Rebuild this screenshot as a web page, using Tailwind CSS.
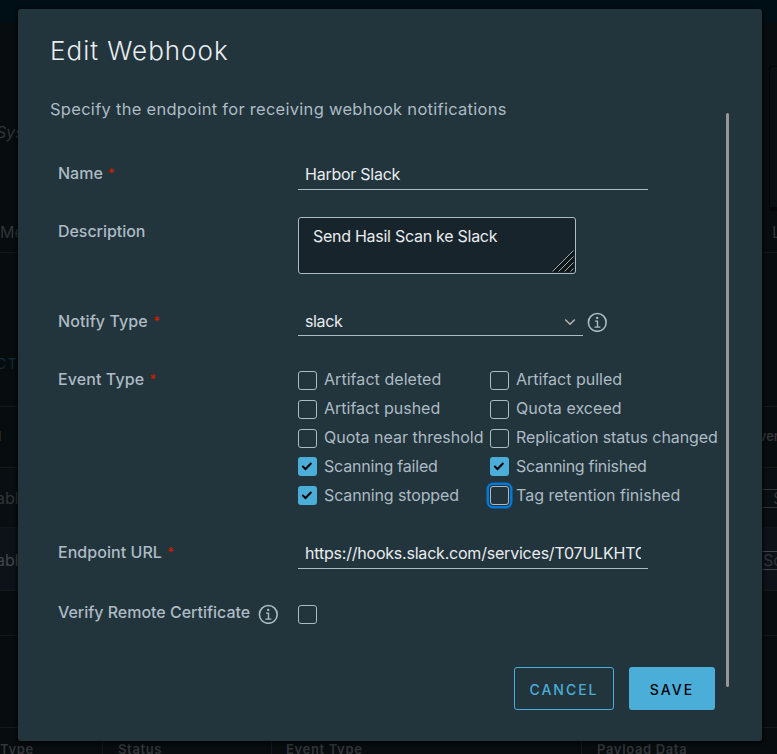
<!DOCTYPE html>
<html lang="en">
<head>
  <meta charset="UTF-8" />
  <meta name="viewport" content="width=device-width, initial-scale=1.0" />
  <title>Edit Webhook</title>
  <script src="https://cdn.jsdelivr.net/npm/@tailwindcss/browser@4"></script>
</head>
<body class="relative h-[754px] w-[777px] overflow-hidden bg-[#070c0f] font-['Inter',sans-serif] text-base text-[#adbbc4]">

  <!-- Page behind the dialog -->
  <div class="flex h-full flex-col overflow-hidden text-[#303538]">
    <div class="h-[23px] shrink-0 bg-[#000f16]"></div>
    <div class="flex h-[188px] shrink-0 justify-between">
      <span class="-ml-1 mt-[97px] italic">Sys</span>
      <div class="mt-[43px] w-2 rounded-l-sm border border-r-0 border-b-4 border-[#030506] bg-[#080e12]"></div>
    </div>
    <div class="flex h-[42px] shrink-0 items-center justify-between border-b border-[#14191c]"><span>Me</span><span class="-mr-1">L</span></div>
    <div class="flex h-[154px] shrink-0 items-end border-b border-[#14191c] pb-[34px] text-sm leading-4 tracking-[1.5px] text-[#102a36]"><span class="-ml-1">CT</span></div>
    <div class="flex h-[61px] shrink-0 items-center justify-between border-b border-[#14191c] text-[13px] font-semibold"><span class="-ml-0.5">l</span><span class="-mr-0.5">ver</span></div>
    <div class="flex h-[60px] shrink-0 items-center justify-between border-b border-[#101518] bg-[#080e11] pt-px">
      <span class="-ml-1">abl</span>
      <div class="h-[19px] w-4 overflow-hidden border-y border-[#303538] pl-3 leading-4">S</div>
    </div>
    <div class="flex h-[63px] shrink-0 items-center justify-between border-b border-[#14191c] bg-[#0c1218] pt-0.5">
      <span class="-ml-1 text-[#40464a]">abl</span>
      <div class="h-[19px] w-4 overflow-hidden border-y border-[#40464a] pl-0.5 leading-4">Sc</div>
    </div>
    <div class="h-[45px] shrink-0 border-b border-[#14191c]"></div>
    <div class="h-[92px] shrink-0 border-b border-[#14191c]"></div>
    <div class="flex h-11 shrink-0 text-[13px] leading-[43px] font-semibold tracking-[0.65px]">
      <div class="w-[103px] border-r border-[#14191c]">Type</div>
      <div class="w-[169px] border-r border-[#14191c] pl-[15px]">Status</div>
      <div class="w-[310px] border-r border-[#14191c] pl-3.5">Event Type</div>
      <div class="pl-[15px]">Payload Data</div>
    </div>
  </div>

  <!-- Dialog -->
  <div class="absolute top-[9px] left-[18px] flex h-[732px] w-[744px] flex-col rounded-[3px] bg-[#22343c] pt-6 pl-8 shadow-[0_1px_3px_2px_rgba(0,0,0,0.5)]">
    <h3 class="h-9 text-[26px] leading-9 font-light tracking-[1px] text-[#e9ecef]">Edit Webhook</h3>

    <div class="mt-7 flex">
      <div class="w-[676px]">
        <p class="h-6 text-[16.5px] leading-6 tracking-[0.28px] whitespace-nowrap">Specify the endpoint for receiving webhook notifications</p>

        <form class="mt-[38px] pl-[7px] leading-7">
          <div class="flex h-[58px]">
            <label class="w-[241px] pl-px font-[550]">Name <span class="ml-px align-[1px] text-[13px] text-[#c92100]">*</span></label>
            <div class="h-[31px] w-[350px] border-b border-[#adbbc4] px-[7px] leading-[30px] tracking-[-0.25px] text-[#e9ecef]">Harbor Slack</div>
          </div>

          <div class="flex h-[90px]">
            <label class="w-[241px] pl-px font-[550] tracking-[-0.05px]">Description</label>
            <div class="relative h-[57px] w-[278px] rounded-[3px] border border-[#adbbc4] bg-[#17242b] px-3.5 pt-1 tracking-[-0.27px] text-[#e9ecef]">Send Hasil Scan ke Slack
              <svg class="absolute right-px bottom-px h-[22px] w-[22px]" viewBox="0 0 22 22" fill="none">
                <path d="M0 22 22 0v22z" fill="#0e171b" />
                <path d="M.5 21.5l21-21M6.5 21.5l15-15M12.5 21.5l9-9M18.5 21.5l3-3" stroke="#aaa8a4" />
              </svg>
            </div>
          </div>

          <div class="flex h-[58px]">
            <label class="w-[241px] pl-px font-[550] tracking-[0.1px]">Notify Type <span class="ml-px align-[1px] text-[13px] text-[#c92100]">*</span></label>
            <div class="flex h-[29px] w-[285px] items-center justify-between border-b border-[#adbbc4] pr-[7px] pl-[7px] tracking-[-0.35px] text-[#e9ecef]">
              <span>slack</span>
              <svg class="mt-0.5 h-3 w-3" viewBox="0 0 12 12" fill="none" stroke="#b9b7b2" stroke-width="1.5"><path d="M1.2 3.5 6 8.3l4.8-4.8" /></svg>
            </div>
            <svg class="mt-[5px] ml-1 h-5 w-5" viewBox="0 0 20 20" fill="none" stroke="#adbbc4">
              <circle cx="10.3" cy="10.4" r="8.9" stroke-width="1.6" />
              <circle cx="10.2" cy="5.9" r="1.2" fill="#adbbc4" stroke="none" />
              <path d="M8 9.1h2.5v6M7.5 15.1h5.8" stroke-width="1.4" />
            </svg>
          </div>

          <div class="flex h-[173px]">
            <label class="w-[241px] shrink-0 pl-px font-[550] tracking-[0.1px]">Event Type <span class="ml-px align-[1px] text-[13px] text-[#c92100]">*</span></label>
            <div id="eventTypes" class="grid h-[145px] grid-cols-[192px_228px] grid-rows-5 whitespace-nowrap"></div>
          </div>

          <div class="flex h-[60px]">
            <label class="w-[241px] pl-px font-[550] tracking-[0.05px]">Endpoint URL <span class="ml-px align-[1px] text-[13px] text-[#c92100]">*</span></label>
            <div class="h-[31px] w-[350px] border-b border-[#adbbc4] px-[7px] leading-[30px] tracking-[-0.21px] text-[#e9ecef]">
              <div class="overflow-hidden whitespace-nowrap">https://hooks.slack.com/services/T07ULKHTC</div>
            </div>
          </div>

          <div class="flex h-[69px]">
            <div class="flex w-[241px] pl-px font-[550] tracking-[-0.02px]">
              <label class="w-[200px] whitespace-nowrap">Verify Remote Certificate</label>
              <svg class="mt-1.5 h-5 w-5" viewBox="0 0 20 20" fill="none" stroke="#adbbc4">
                <circle cx="10.3" cy="10.4" r="8.9" stroke-width="1.6" />
                <circle cx="10.2" cy="5.9" r="1.2" fill="#adbbc4" stroke="none" />
                <path d="M8 9.1h2.5v6M7.5 15.1h5.8" stroke-width="1.4" />
              </svg>
            </div>
            <span class="mt-[7px] h-[19px] w-[19px] rounded-[3px] border border-[#adbbc4]"></span>
          </div>

          <div class="flex justify-end gap-[15px] pr-[11px] text-sm font-medium">
            <button type="button" class="h-[43px] w-[100px] rounded-[3px] border border-[#4aaed9] pt-0.5 tracking-[2px] text-[#4aaed9]">CANCEL</button>
            <button type="button" class="h-[43px] w-[86px] rounded-[3px] bg-[#4aaed9] pt-0.5 tracking-[2.1px] text-black">SAVE</button>
          </div>
        </form>
      </div>

      <!-- Scrollbar thumb -->
      <div class="mt-4 h-[574px] w-[3px] rounded-full bg-[#999796]"></div>
    </div>
  </div>

  <script>
    const events = [
      { name: "Artifact deleted", tracking: "tracking-[0.05px]" },
      { name: "Artifact pulled", tracking: "tracking-normal" },
      { name: "Artifact pushed", tracking: "tracking-normal" },
      { name: "Quota exceed", tracking: "tracking-[0.05px]" },
      { name: "Quota near threshold", tracking: "tracking-normal" },
      { name: "Replication status changed", tracking: "tracking-[-0.1px]" },
      { name: "Scanning failed", tracking: "tracking-[-0.2px]", checked: true },
      { name: "Scanning finished", tracking: "tracking-[-0.28px]", checked: true },
      { name: "Scanning stopped", tracking: "tracking-[-0.13px]", checked: true },
      { name: "Tag retention finished", tracking: "tracking-normal", focused: true }
    ];

    const container = document.getElementById("eventTypes");

    events.forEach(({ name, tracking, checked, focused }) => {
      let box = `<span class="mt-[6px] h-[19px] w-[19px] shrink-0 rounded-[3px] border border-[#adbbc4]"></span>`;
      if (focused) {
        box = `<span class="mt-[5px] h-[19px] w-[19px] shrink-0 rounded-[3px] border border-[#adbbc4] shadow-[0_0_0_1px_#22343c,0_0_0_3.5px_#0079d8]"></span>`;
      }
      if (checked) {
        box = `
          <span class="mt-[5px] h-[19px] w-[19px] shrink-0 rounded-[3px] bg-[#4aaed9]">
            <svg class="h-[19px] w-[19px]" viewBox="0 0 19 19" fill="none" stroke="#000" stroke-width="2"><path d="M4.3 9 7.5 12 13.4 6" /></svg>
          </span>`;
      }
      container.innerHTML += `<label class="flex gap-[7px]">${box}<span class="${tracking}">${name}</span></label>`;
    });
  </script>
</body>
</html>
